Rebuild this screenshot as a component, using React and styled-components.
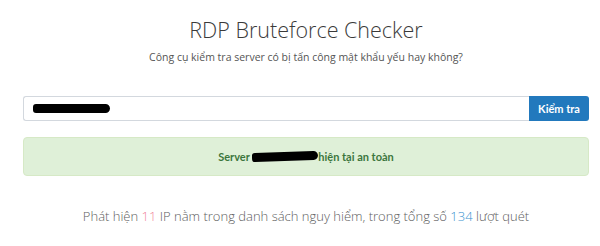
import React from "react";
import styled, { createGlobalStyle } from "styled-components";

const GlobalStyle = createGlobalStyle`
  html, body {
    margin: 0;
    padding: 0;
    background: #ffffff;
  }
  body {
    font-family: "Open Sans", "Liberation Sans", sans-serif;
  }
`;

const Page = styled.div`
  width: 600px;
  height: 246px;
  overflow: hidden;
  padding: 15px 11px 0 23px;
  box-sizing: border-box;
  display: flex;
  flex-direction: column;
`;

const Title = styled.h1`
  margin: 0;
  font-size: 21.5px;
  line-height: 30px;
  font-weight: 300;
  color: #3a3a3a;
  text-align: center;
`;

const Subtitle = styled.p`
  margin: 4px 0 0;
  font-size: 10.5px;
  line-height: 16px;
  color: #555;
  text-align: center;
`;

const SearchRow = styled.div`
  display: flex;
  margin-top: 31px;
  height: 25px;
`;

const InputBox = styled.div`
  flex: 1;
  display: flex;
  align-items: center;
  padding-left: 9px;
  border: 1px solid #d3d8de;
  border-right: none;
  border-radius: 3px 0 0 3px;
  background: #fff;
`;

const Redacted = styled.span`
  display: inline-block;
  width: ${(p) => p.$w}px;
  height: ${(p) => p.$h}px;
  background: #000;
  border-radius: 4px 6px 6px 4px;
  transform: rotate(${(p) => p.$tilt || 0}deg);
`;

const CheckButton = styled.button`
  width: 60px;
  border: none;
  border-radius: 0 3px 3px 0;
  background: #2279bd;
  color: #fff;
  font-family: "Lato", "Liberation Sans", sans-serif;
  font-weight: 700;
  font-size: 11px;
  padding: 0;
`;

const Alert = styled.div`
  margin-top: 16px;
  height: 39px;
  display: flex;
  align-items: center;
  justify-content: center;
  background: #dff0d8;
  border: 1px solid #d6e9c6;
  border-radius: 4px;
  box-sizing: border-box;
  color: #3c763d;
  font-family: "Lato", "Liberation Sans", sans-serif;
  font-weight: 700;
  font-size: 11px;
`;

const Footer = styled.p`
  margin: 30px 0 0;
  font-size: 13px;
  line-height: 20px;
  font-weight: 300;
  color: #5e5e5e;
  text-align: center;
`;

const Num = styled.span`
  color: ${(p) => (p.$tone === "danger" ? "#f0849a" : "#3b94cf")};
`;

export default function App() {
  return (
    <>
      <GlobalStyle />
      <Page>
        <Title>RDP Bruteforce Checker</Title>
        <Subtitle>Công cụ kiểm tra server có bị tấn công mật khẩu yếu hay không?</Subtitle>
        <SearchRow>
          <InputBox>
            <Redacted $w={77} $h={9} />
          </InputBox>
          <CheckButton>Kiểm tra</CheckButton>
        </SearchRow>
        <Alert>
          Server&nbsp;<Redacted $w={66} $h={9} $tilt={-2} />hiện tại an toàn
        </Alert>
        <Footer>
          Phát hiện <Num $tone="danger">11</Num> IP nằm trong danh sách nguy hiểm, trong tổng số{" "}
          <Num>134</Num> lượt quét
        </Footer>
      </Page>
    </>
  );
}
